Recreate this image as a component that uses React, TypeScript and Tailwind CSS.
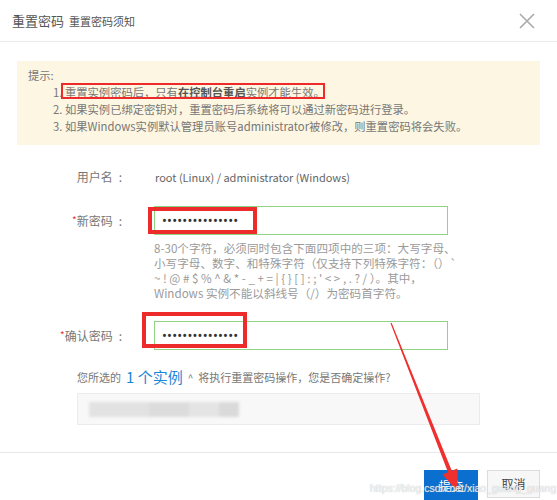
const dots = '•••••••••••••••';

function CloseIcon() {
  return (
    <svg width="16" height="16" viewBox="0 0 16 16" className="text-[#aaa]">
      <path d="M1 1L15 15M15 1L1 15" stroke="currentColor" strokeWidth="1.6" fill="none" />
    </svg>
  );
}

function Header() {
  return (
    <div className="h-[42px] shrink-0 border-b border-[#ececec] flex items-center justify-between pl-[12px] pr-[22px]">
      <div className="flex items-baseline gap-[5px] text-[#555]">
        <span className="text-[13px]">重置密码</span>
        <span className="text-[11px]">重置密码须知</span>
      </div>
      <CloseIcon />
    </div>
  );
}

function Notice() {
  return (
    <div className="h-[84px] bg-[#fdf6e2] pl-[11px] pt-[6px] text-[11.3px] leading-[17px] text-[#777]">
      <p>提示:</p>
      <div className="pl-[25px]">
        <p>
          1. 重置实例密码后，只有<span className="font-bold text-[#555]">在控制台重启</span>实例才能生效。
        </p>
        <p>2. 如果实例已绑定密钥对，重置密码后系统将可以通过新密码进行登录。</p>
        <p>3. 如果Windows实例默认管理员账号administrator被修改，则重置密码将会失败。</p>
      </div>
    </div>
  );
}

function Label({ text, required }: { text: string; required?: boolean }) {
  return (
    <div className="w-[105px] shrink-0 text-right text-[12px] text-[#777]">
      {required && <span className="text-[#e33] text-[10px] align-top">*</span>}
      {text}
      <span className="ml-[6px]">:</span>
    </div>
  );
}

function PasswordInput() {
  return (
    <div className="ml-[32px] w-[294px] h-[29px] border border-[#8fd383] flex items-center pl-[7px] text-[13px] text-[#333] tracking-[0.2px] [font-family:'Noto_Sans',sans-serif]">
      {dots}
    </div>
  );
}

function Arrow() {
  return (
    <svg className="absolute left-0 top-0 pointer-events-none" width="557" height="500">
      <polygon
        points="390.5,323.2 391.6,322.8 451.8,470.8 457.3,468.6 458,492 442.5,474.5 448,472.3"
        fill="#f02f2f"
      />
    </svg>
  );
}

export default function App() {
  return (
    <div className="relative w-[557px] h-[500px] overflow-hidden bg-white flex flex-col [font-family:'Noto_Sans_CJK_SC','Noto_Sans',sans-serif]">
      <Header />
      <div className="flex-1 px-[17px] pt-[19px]">
        <Notice />

        <div className="mt-[22px] flex items-center h-[20px]">
          <Label text="用户名" />
          <div className="ml-[33px] text-[11px] text-[#666]">root (Linux) / administrator (Windows)</div>
        </div>

        <div className="mt-[19px] flex items-center">
          <Label text="新密码" required />
          <PasswordInput />
        </div>
        <div className="ml-[137px] mt-[6px] w-[310px] text-[11.6px] leading-[15px] text-[#9a9a9a]">
          <p>8-30个字符，必须同时包含下面四项中的三项：大写字母、</p>
          <p>小写字母、数字、和特殊字符（仅支持下列特殊字符：（）`</p>
          <p>~ ! @ # $ % ^ &amp; * - _ + = | {'{ }'} [ ] : ; ' &lt; &gt; , . ? / ）。其中，</p>
          <p>Windows 实例不能以斜线号（/）为密码首字符。</p>
        </div>

        <div className="mt-[20px] flex items-center">
          <Label text="确认密码" required />
          <PasswordInput />
        </div>

        <div className="mt-[16px] ml-[60px] h-[22px] flex items-center text-[11px] text-[#777]">
          <span>您所选的</span>
          <span className="mx-[5px] text-[15px] text-[#1a86d8]">1 个实例</span>
          <span className="text-[10px] mr-[5px]">^</span>
          <span>将执行重置密码操作，您是否确定操作?</span>
        </div>

        <div className="mt-[5px] ml-[60px] w-[403px] h-[32px] bg-[#f8f8f8] border border-[#ebebeb] flex items-center pl-[11px]">
          <div className="flex h-[15px] blur-[1.5px]">
            <div className="w-[60px] bg-[#e2e2e2]" />
            <div className="w-[40px] bg-[#dcdcdc]" />
            <div className="w-[30px] bg-[#e4e4e4]" />
            <div className="w-[20px] bg-[#dadada]" />
          </div>
        </div>
      </div>

      <div className="h-[48px] shrink-0 border-t border-[#e8e8e8] flex justify-end items-start pt-[17px] pr-[17px] gap-[9px]">
        <div className="w-[54px] h-[31px] bg-[#0a6fcf] text-white text-[12px] flex items-center justify-center">提交</div>
        <div className="w-[53px] h-[28px] bg-[#f7f7f7] border border-[#dcdcdc] text-[#444] text-[12px] flex items-center justify-center">取消</div>
      </div>

      {/* annotation overlays */}
      <div className="absolute left-[61px] top-[83px] w-[264px] h-[16px] border-[2.5px] border-[#ee2b2b]" />
      <div className="absolute left-[148px] top-[207px] w-[109px] h-[27px] border-[4px] border-[#ee2b2b]" />
      <div className="absolute left-[142px] top-[312px] w-[105px] h-[36px] border-[4px] border-[#ee2b2b]" />
      <Arrow />
      <div className="absolute left-[370px] top-[481px] text-[10.5px] text-white/80 [text-shadow:0_0_1px_#aaa] [font-family:'Liberation_Sans',sans-serif]">
        https://blog.csdn.net/xiao_guang_guang
      </div>
    </div>
  );
}
